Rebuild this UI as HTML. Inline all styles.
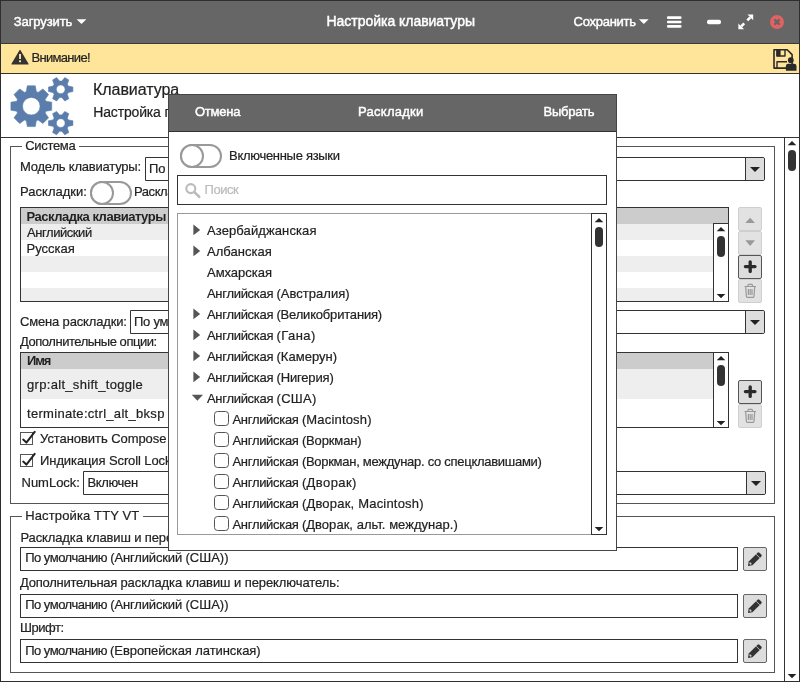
<!DOCTYPE html>
<html lang="ru">
<head>
<meta charset="utf-8">
<title>Настройка клавиатуры</title>
<style>
*{box-sizing:border-box;margin:0;padding:0}
html,body{width:800px;height:682px;overflow:hidden;background:#fff}
body{position:relative;font-family:"Liberation Sans",sans-serif;font-size:13px;color:#222}
#root{position:absolute;left:0;top:0;width:800px;height:682px;will-change:transform}
.a{position:absolute}
.t{position:absolute;white-space:nowrap;line-height:16px;height:16px;-webkit-text-stroke:.2px}
svg{position:absolute;overflow:visible}
#titlebar{left:0;top:0;width:800px;height:44px;background:#666;border-bottom:1px solid #3a3a3a}
#warn{left:0;top:44px;width:800px;height:30px;background:#ffe599;border-bottom:1px solid #333}
#hdrline{left:0;top:137px;width:800px;height:1px;background:#333}
#frame{left:0;top:0;width:800px;height:682px;border:1px solid #2e2e2e;pointer-events:none}
#sbar{left:784px;top:138px;width:1px;height:544px;background:#333}
.fs{border:1px solid #555}
.box{border:1px solid #333;background:#fff}
.sel{border-radius:0 2px 2px 0}
.lg{background:#fff}
.ddb{position:absolute;right:0;top:0;bottom:0;width:19px;background:#ddd;border-left:1px solid #333;border-radius:0 2px 2px 0}
.ddb:after{content:"";position:absolute;left:4px;top:9px;border:5px solid transparent;border-top:5px solid #222;border-bottom:0}
.btn{border:1px solid #555;background:#ddd;border-radius:2px}
.btn.dis{border-color:#cfcfcf;background:#e2e2e2}
.thumb{background:#333;border-radius:4px}
.tri-u{width:10px;height:5px;background:#222;clip-path:polygon(.7px 4.2px,5px 0,9.3px 4.2px)}
.tri-d{width:10px;height:5px;background:#222;clip-path:polygon(.7px 0,9.3px 0,5px 4.3px)}
.tgl{border:2px solid #999;border-radius:12px;background:#fff}
.tgl i{position:absolute;left:-2px;top:-2px;width:24px;height:24px;border:2px solid #999;border-radius:12px;background:#fff}
.row{left:21px;width:692px}
.cb{width:15px;height:15px;border:1px solid #555;border-radius:3px;background:#fff}
#modal{left:168px;top:94px;width:449px;height:457px;background:#fff;border:1px solid #444}
#mhead{left:168px;top:94px;width:449px;height:38px;background:#666;border:1px solid #444;border-bottom-color:#333}
</style>
</head>
<body>
<div id="root">
<div class="a" id="titlebar"></div>
<div class="a" id="warn"></div>
<div class="a" id="hdrline"></div>
<div class="a" id="sbar"></div>

<!-- fieldsets -->
<div class="a fs" style="left:10px;top:146px;width:765px;height:358px"></div>
<div class="a lg" style="left:22px;top:140px;width:57px;height:12px"></div>
<div class="a fs" style="left:10px;top:516px;width:765px;height:157px"></div>
<div class="a lg" style="left:22px;top:510px;width:121px;height:12px"></div>

<!-- selects -->
<div class="a box sel" style="left:145px;top:157px;width:620px;height:24px"><div class="ddb"></div></div>
<div class="a box sel" style="left:130px;top:310px;width:635px;height:24px"><div class="ddb"></div></div>
<div class="a box sel" style="left:83px;top:471px;width:683px;height:24px"><div class="ddb"></div></div>

<!-- toggle main -->
<div class="a tgl" style="left:90px;top:181px;width:42px;height:24px"><i></i></div>

<!-- table 1 -->
<div class="a box" style="left:20px;top:207px;width:709px;height:95px"></div>
<div class="a" style="left:21px;top:208px;width:707px;height:16px;background:#ccc"></div>
<div class="a row" style="top:224px;height:16px;background:#eee"></div>
<div class="a row" style="top:256px;height:16px;background:#eee"></div>
<div class="a row" style="top:288px;height:13px;background:#eee"></div>
<div class="a box" style="left:713px;top:223px;width:16px;height:79px"></div>
<div class="a tri-u" style="left:716px;top:227px"></div>
<div class="a thumb" style="left:717px;top:236px;width:8px;height:21px"></div>
<div class="a tri-d" style="left:716px;top:294px"></div>
<!-- table1 buttons -->
<div class="a btn dis" style="left:738px;top:207px;width:24px;height:24px"></div>
<div class="a btn dis" style="left:738px;top:231px;width:24px;height:24px"></div>
<div class="a btn" style="left:738px;top:255px;width:24px;height:24px"></div>
<div class="a btn dis" style="left:738px;top:279px;width:24px;height:24px"></div>

<!-- table 2 -->
<div class="a box" style="left:20px;top:352px;width:709px;height:76px"></div>
<div class="a row" style="top:353px;height:16px;background:#ccc"></div>
<div class="a row" style="top:369px;height:30px;background:#eee"></div>
<div class="a box" style="left:713px;top:352px;width:16px;height:76px"></div>
<div class="a tri-u" style="left:716px;top:356px"></div>
<div class="a thumb" style="left:717px;top:365px;width:8px;height:21px"></div>
<div class="a tri-d" style="left:716px;top:421px"></div>
<div class="a btn" style="left:738px;top:380px;width:24px;height:24px"></div>
<div class="a btn dis" style="left:738px;top:404px;width:24px;height:24px"></div>

<!-- checkboxes -->
<div class="a" style="left:20px;top:432px;width:13px;height:13px;border:1px solid #555"></div>
<div class="a" style="left:20px;top:454px;width:13px;height:13px;border:1px solid #555"></div>

<!-- inputs TTY -->
<div class="a box" style="left:20px;top:547px;width:718px;height:24px"></div>
<div class="a box" style="left:20px;top:594px;width:718px;height:24px"></div>
<div class="a box" style="left:20px;top:639px;width:718px;height:24px"></div>
<div class="a btn" style="left:743px;top:547px;width:24px;height:24px;border-color:#666"></div>
<div class="a btn" style="left:743px;top:594px;width:24px;height:24px;border-color:#666"></div>
<div class="a btn" style="left:743px;top:639px;width:24px;height:24px;border-color:#666"></div>

<!-- main scrollbar -->
<div class="a tri-u" style="left:787px;top:141px"></div>
<div class="a thumb" style="left:788px;top:150px;width:8px;height:21px"></div>
<div class="a tri-d" style="left:787px;top:674px"></div>

<!--BSVG0--><svg width="800" height="682" viewBox="0 0 800 682" style="left:0;top:0">
<!-- carets -->
<path d="M76.6 19.3h9.8l-4.9 4.8z" fill="#fff"/>
<path d="M638.9 19.3h9.8l-4.9 4.8z" fill="#fff"/>
<!-- hamburger -->
<g fill="#fff"><rect x="667" y="16.3" width="14.5" height="2.6" rx="1"/><rect x="667" y="20.7" width="14.5" height="2.6" rx="1"/><rect x="667" y="25.1" width="14.5" height="2.6" rx="1"/></g>
<!-- minimize -->
<rect x="707" y="19.7" width="14" height="4.5" rx="2" fill="#fff"/>
<!-- expand -->
<g fill="#fff" stroke="#fff"><path d="M750.3 17.4L747.3 20.4M741.2 26.4L744.2 23.4" stroke-width="2.6" fill="none"/><path d="M753.2 14.6v5.7l-5.7-5.7z" stroke="none"/><path d="M738.4 29.2v-5.7l5.7 5.7z" stroke="none"/></g>
<!-- close -->
<circle cx="777" cy="22" r="7" fill="#e06262"/>
<path d="M775.1 20.1l3.8 3.8M778.9 20.1l-3.8 3.8" stroke="#6a6464" stroke-width="2.4" stroke-linecap="round"/>
<!-- warning -->
<path d="M20 50.5L28 64H12z" fill="#333" stroke="#333" stroke-width="1.2" stroke-linejoin="round"/>
<rect x="19.1" y="54" width="1.9" height="5" fill="#ffe599"/><rect x="19.1" y="60.3" width="1.9" height="1.9" fill="#ffe599"/>
<!-- save icon -->
<path d="M774 49.7h13.2l4.9 4.9v13.5h-18.1z" fill="none" stroke="#2a2a2a" stroke-width="1.6" stroke-linejoin="round"/>
<path d="M777 49.7v6.3h8v-6.3" fill="none" stroke="#2a2a2a" stroke-width="1.4" stroke-linejoin="round"/>
<rect x="776.4" y="49.7" width="4.2" height="6.6" fill="#2a2a2a"/>
<path d="M777 68.1v-6.3h10" fill="none" stroke="#2a2a2a" stroke-width="1.4" stroke-linejoin="round"/>
<circle cx="790.8" cy="60.2" r="2.9" fill="#2a2a2a"/>
<path d="M785.9 70.8v-4.6a2.4 2.4 0 0 1 2.4-2.4h5.8a2.4 2.4 0 0 1 2.4 2.4v4.6z" fill="#2a2a2a"/>
<!-- gears -->
<g fill="#5a7dab" fill-rule="evenodd" stroke="#5a7dab" stroke-width=".6" stroke-linejoin="round">
<path d="M36.3 120.8 L35.3 126.6 L27.3 126.6 L26.3 120.8 L24.5 120.0 L19.7 123.5 L14.0 117.8 L17.5 113.0 L16.7 111.2 L10.9 110.2 L10.9 102.2 L16.7 101.2 L17.5 99.4 L14.0 94.6 L19.7 88.9 L24.5 92.4 L26.3 91.6 L27.3 85.8 L35.3 85.8 L36.3 91.6 L38.1 92.4 L42.9 88.9 L48.6 94.6 L45.1 99.4 L45.9 101.2 L51.7 102.2 L51.7 110.2 L45.9 111.2 L45.1 113.0 L48.6 117.8 L42.9 123.5 L38.1 120.0Z M22.5 106.2a8.8 8.8 0 1 0 17.6 0a8.8 8.8 0 1 0 -17.6 0Z"/>
<path d="M68.4 86.1 L72.9 87.0 L72.9 91.6 L68.4 92.5 L67.3 94.3 L68.8 98.7 L64.8 101.0 L61.8 97.5 L59.6 97.5 L56.6 101.0 L52.6 98.7 L54.1 94.3 L53.0 92.5 L48.5 91.6 L48.5 87.0 L53.0 86.1 L54.1 84.3 L52.6 79.9 L56.6 77.6 L59.6 81.1 L61.8 81.1 L64.8 77.6 L68.8 79.9 L67.3 84.3Z M56.3 89.3a4.4 4.4 0 1 0 8.8 0a4.4 4.4 0 1 0 -8.8 0Z"/>
<path d="M68.4 119.9 L72.9 120.8 L72.9 125.4 L68.4 126.3 L67.3 128.1 L68.8 132.5 L64.8 134.8 L61.8 131.3 L59.6 131.3 L56.6 134.8 L52.6 132.5 L54.1 128.1 L53.0 126.3 L48.5 125.4 L48.5 120.8 L53.0 119.9 L54.1 118.1 L52.6 113.7 L56.6 111.4 L59.6 114.9 L61.8 114.9 L64.8 111.4 L68.8 113.7 L67.3 118.1Z M56.3 123.1a4.4 4.4 0 1 0 8.8 0a4.4 4.4 0 1 0 -8.8 0Z"/>
</g>
<!-- table button icons -->
<path d="M745.3 223l4.85-5.3 4.85 5.3z" fill="#999"/>
<path d="M745.3 240.3l4.85 5.6 4.85-5.6z" fill="#999"/>
<path d="M750.2 261.8v9.6M745.4 266.6h9.6" stroke="#2a2a2a" stroke-width="3.3" stroke-linecap="round"/>
<path d="M750.2 386.8v9.6M745.4 391.6h9.6" stroke="#2a2a2a" stroke-width="3.3" stroke-linecap="round"/>
<g fill="none" stroke="#999" stroke-width="1.2">
<path d="M744.5 286.5h11.5M747.5 286.3l1-2h3.4l1 2M745.7 286.8l.7 9.5a1 1 0 0 0 1 1h5.6a1 1 0 0 0 1-1l.7-9.5M748.4 289v6M750.2 289v6M752 289v6"/>
</g>
<g fill="none" stroke="#999" stroke-width="1.2" transform="translate(0 125)">
<path d="M744.5 286.5h11.5M747.5 286.3l1-2h3.4l1 2M745.7 286.8l.7 9.5a1 1 0 0 0 1 1h5.6a1 1 0 0 0 1-1l.7-9.5M748.4 289v6M750.2 289v6M752 289v6"/>
</g>
<!-- pencils -->
<g><path d="M748 566l.7-4.4 8.9-8.9a1.3 1.3 0 0 1 1.8 0l1.9 1.9a1.3 1.3 0 0 1 0 1.8l-8.9 8.9z" fill="#333"/><path d="M756.1 554.2l3.7 3.7" stroke="#ddd" stroke-width=".8"/><ellipse cx="750.4" cy="563.5" rx="1.3" ry=".9" transform="rotate(45 750.4 563.5)" fill="#ccc"/></g>
<g transform="translate(0 47)"><path d="M748 566l.7-4.4 8.9-8.9a1.3 1.3 0 0 1 1.8 0l1.9 1.9a1.3 1.3 0 0 1 0 1.8l-8.9 8.9z" fill="#333"/><path d="M756.1 554.2l3.7 3.7" stroke="#ddd" stroke-width=".8"/><ellipse cx="750.4" cy="563.5" rx="1.3" ry=".9" transform="rotate(45 750.4 563.5)" fill="#ccc"/></g>
<g transform="translate(0 92)"><path d="M748 566l.7-4.4 8.9-8.9a1.3 1.3 0 0 1 1.8 0l1.9 1.9a1.3 1.3 0 0 1 0 1.8l-8.9 8.9z" fill="#333"/><path d="M756.1 554.2l3.7 3.7" stroke="#ddd" stroke-width=".8"/><ellipse cx="750.4" cy="563.5" rx="1.3" ry=".9" transform="rotate(45 750.4 563.5)" fill="#ccc"/></g>
<!-- checks -->
<path d="M23.2 439.6l3.2 3 8.3-10.8" fill="none" stroke="#222" stroke-width="2" stroke-linecap="round" stroke-linejoin="round"/>
<path d="M23.2 461.6l3.2 3 8.3-10.8" fill="none" stroke="#222" stroke-width="2" stroke-linecap="round" stroke-linejoin="round"/>
</svg><!--BSVG1-->
<div class="t" style="left:13.8px;top:14px;color:#fff;-webkit-text-stroke:.45px;letter-spacing:-0.11px">Загрузить</div>
<div class="t" style="left:326.5px;top:13px;font-size:14px;color:#fff;-webkit-text-stroke:.45px;letter-spacing:-0.03px">Настройка клавиатуры</div>
<div class="t" style="left:573.5px;top:14px;color:#fff;-webkit-text-stroke:.45px;letter-spacing:-0.26px">Сохранить</div>
<div class="t" style="left:31.5px;top:50px;letter-spacing:-0.69px">Внимание!</div>
<div class="t" style="left:93.1px;top:82px;font-size:16px;letter-spacing:-0.07px">Клавиатура</div>
<div class="t" style="left:93.2px;top:104px;font-size:14px;letter-spacing:-0.15px">Настройка параметров клавиатуры</div>
<div class="t" style="left:25.3px;top:138px;letter-spacing:-0.34px">Система</div>
<div class="t" style="left:20.0px;top:159px;letter-spacing:-0.21px">Модель клавиатуры:</div>
<div class="t" style="left:149.0px;top:161px;letter-spacing:-0.10px">По умолчанию</div>
<div class="t" style="left:20.0px;top:184px;letter-spacing:0.02px">Раскладки:</div>
<div class="t" style="left:134.0px;top:184px;letter-spacing:-0.44px">Раскладки по умолчанию</div>
<div class="t" style="left:26.5px;top:209px;font-weight:bold;-webkit-text-stroke:0;letter-spacing:-0.48px">Раскладка клавиатуры</div>
<div class="t" style="left:27.0px;top:225px;letter-spacing:-0.44px">Английский</div>
<div class="t" style="left:26.5px;top:241px;letter-spacing:0.02px">Русская</div>
<div class="t" style="left:20.0px;top:314px;letter-spacing:-0.16px">Смена раскладки:</div>
<div class="t" style="left:134.0px;top:314px;letter-spacing:-0.23px">По умолчанию</div>
<div class="t" style="left:20.0px;top:334px;letter-spacing:-0.46px">Дополнительные опции:</div>
<div class="t" style="left:27.0px;top:353px;font-weight:bold;-webkit-text-stroke:0;letter-spacing:-1.05px">Имя</div>
<div class="t" style="left:27.0px;top:377px;letter-spacing:0.31px">grp:alt_shift_toggle</div>
<div class="t" style="left:27.0px;top:406px;letter-spacing:0.30px">terminate:ctrl_alt_bksp</div>
<div class="t" style="left:40.1px;top:431px;letter-spacing:-0.07px">Установить Compose клавишу</div>
<div class="t" style="left:40.1px;top:453px;letter-spacing:-0.11px">Индикация Scroll Lock</div>
<div class="t" style="left:21.5px;top:475px;letter-spacing:-0.01px">NumLock:</div>
<div class="t" style="left:87.5px;top:475px;letter-spacing:-0.36px">Включен</div>
<div class="t" style="left:25.2px;top:508px;letter-spacing:0.13px">Настройка TTY VT</div>
<div class="t" style="left:20.5px;top:530px;letter-spacing:-0.13px">Раскладка клавиш и переключатель:</div>
<div class="t" style="left:25.2px;top:550px;letter-spacing:-0.50px">По умолчанию <span style="letter-spacing:-0.15px">(Английский </span><span style="letter-spacing:0.01px">(США))</span></div>
<div class="t" style="left:20.0px;top:575px;letter-spacing:-0.25px">Дополнительная <span style="letter-spacing:-0.08px">раскладка клавиш и переключатель:</span></div>
<div class="t" style="left:25.2px;top:597px;letter-spacing:-0.50px">По умолчанию <span style="letter-spacing:-0.15px">(Английский </span><span style="letter-spacing:0.01px">(США))</span></div>
<div class="t" style="left:20.0px;top:620px;letter-spacing:-0.45px">Шрифт:</div>
<div class="t" style="left:25.2px;top:643px;letter-spacing:-0.51px">По умолчанию <span style="letter-spacing:-0.08px">(Европейская латинская)</span></div>

<!-- MODAL -->
<div class="a" id="modal"></div>
<div class="a" id="mhead"></div>
<div class="a tgl" style="left:180px;top:144px;width:42px;height:24px"><i></i></div>
<div class="a box" style="left:177px;top:175px;width:430px;height:30px"></div>
<div class="a" style="left:177px;top:213px;width:430px;height:322px;border:1px solid #999;background:#fff"></div>
<div class="a box" style="left:591px;top:213px;width:16px;height:322px"></div>
<div class="a tri-u" style="left:594px;top:218px"></div>
<div class="a thumb" style="left:595px;top:227px;width:8px;height:20px"></div>
<div class="a tri-d" style="left:594px;top:527px"></div>
<!--MSVG0--><svg width="800" height="682" viewBox="0 0 800 682" style="left:0;top:0">
<circle cx="190.8" cy="188.6" r="4.5" fill="none" stroke="#bbb" stroke-width="2.1"/><path d="M194.6 192.4l4.6 4.4" stroke="#bbb" stroke-width="2.6" stroke-linecap="round"/>
<g fill="#555"><path d="M193.4 224.5v10.8l6.8-5.4z"/><path d="M193.4 245.5v10.8l6.8-5.4z"/><path d="M193.4 308.5v10.8l6.8-5.4z"/><path d="M193.4 329.5v10.8l6.8-5.4z"/><path d="M193.4 350.5v10.8l6.8-5.4z"/><path d="M193.4 371.5v10.8l6.8-5.4z"/><path d="M191.8 394.7h11.2l-5.6 6z"/></g>
<rect x="214.5" y="411.5" width="14" height="14" rx="3" fill="#fff" stroke="#555"/><rect x="214.5" y="432.5" width="14" height="14" rx="3" fill="#fff" stroke="#555"/><rect x="214.5" y="453.5" width="14" height="14" rx="3" fill="#fff" stroke="#555"/><rect x="214.5" y="474.5" width="14" height="14" rx="3" fill="#fff" stroke="#555"/><rect x="214.5" y="495.5" width="14" height="14" rx="3" fill="#fff" stroke="#555"/><rect x="214.5" y="516.5" width="14" height="14" rx="3" fill="#fff" stroke="#555"/>
</svg><!--MSVG1-->
<div class="t" style="left:194.9px;top:104px;color:#fff;-webkit-text-stroke:.45px;letter-spacing:-0.20px">Отмена</div>
<div class="t" style="left:358.1px;top:104px;color:#fff;-webkit-text-stroke:.45px;letter-spacing:0.26px">Раскладки</div>
<div class="t" style="left:543.5px;top:104px;color:#fff;-webkit-text-stroke:.45px;letter-spacing:-0.22px">Выбрать</div>
<div class="t" style="left:229.1px;top:148px;letter-spacing:-0.30px">Включенные языки</div>
<div class="t" style="left:204.5px;top:182px;color:#bbb;letter-spacing:-0.44px">Поиск</div>
<div class="t" style="left:207.0px;top:223px;letter-spacing:0.10px">Азербайджанская</div>
<div class="t" style="left:207.0px;top:244px;letter-spacing:0.04px">Албанская</div>
<div class="t" style="left:207.0px;top:265px;letter-spacing:-0.03px">Амхарская</div>
<div class="t" style="left:207.0px;top:286px;letter-spacing:-0.30px">Английская <span style="letter-spacing:0.02px">(Австралия)</span></div>
<div class="t" style="left:207.0px;top:307px;letter-spacing:-0.30px">Английская <span style="letter-spacing:-0.19px">(Великобритания)</span></div>
<div class="t" style="left:207.0px;top:328px;letter-spacing:-0.30px">Английская <span style="letter-spacing:0.46px">(Гана)</span></div>
<div class="t" style="left:207.0px;top:349px;letter-spacing:-0.30px">Английская <span style="letter-spacing:0.03px">(Камерун)</span></div>
<div class="t" style="left:207.0px;top:370px;letter-spacing:-0.30px">Английская <span style="letter-spacing:-0.16px">(Нигерия)</span></div>
<div class="t" style="left:207.0px;top:391px;letter-spacing:-0.30px">Английская <span style="letter-spacing:0.33px">(США)</span></div>
<div class="t" style="left:232.5px;top:412px;letter-spacing:-0.31px">Английская <span style="letter-spacing:0.17px">(Macintosh)</span></div>
<div class="t" style="left:232.5px;top:433px;letter-spacing:-0.31px">Английская <span style="letter-spacing:-0.13px">(Воркман)</span></div>
<div class="t" style="left:232.5px;top:454px;letter-spacing:-0.31px">Английская <span style="letter-spacing:-0.28px">(Воркман, междунар. со спецклавишами)</span></div>
<div class="t" style="left:232.5px;top:475px;letter-spacing:-0.31px">Английская <span style="letter-spacing:0.42px">(Дворак)</span></div>
<div class="t" style="left:232.5px;top:496px;letter-spacing:-0.31px">Английская <span style="letter-spacing:0.20px">(Дворак, Macintosh)</span></div>
<div class="t" style="left:232.5px;top:517px;letter-spacing:-0.31px">Английская <span style="letter-spacing:0.03px">(Дворак, альт. междунар.)</span></div>

<div class="a" id="frame"></div>
</div>
</body>
</html>
